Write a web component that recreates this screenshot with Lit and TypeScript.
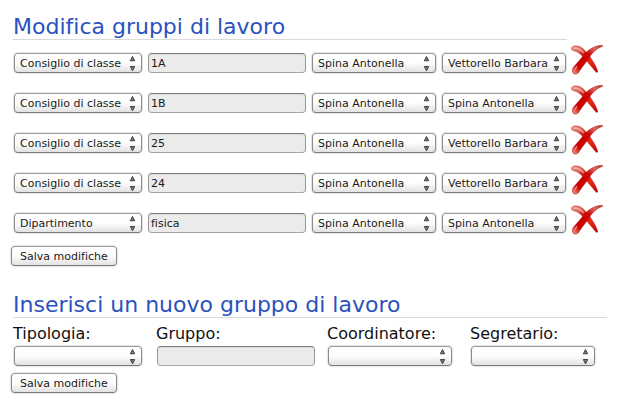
import { LitElement, html, css, svg } from "lit";
import { customElement } from "lit/decorators.js";

const TYPES = ["", "Consiglio di classe", "Dipartimento"];
const TEACHERS = ["", "Spina Antonella", "Vettorello Barbara"];

interface Group {
  type: string;
  name: string;
  coordinator: string;
  secretary: string;
}

const GROUPS: Group[] = [
  { type: TYPES[1], name: "1A", coordinator: TEACHERS[1], secretary: TEACHERS[2] },
  { type: TYPES[1], name: "1B", coordinator: TEACHERS[1], secretary: TEACHERS[1] },
  { type: TYPES[1], name: "25", coordinator: TEACHERS[1], secretary: TEACHERS[2] },
  { type: TYPES[1], name: "24", coordinator: TEACHERS[1], secretary: TEACHERS[2] },
  { type: TYPES[2], name: "fisica", coordinator: TEACHERS[1], secretary: TEACHERS[1] },
];

const cross = svg`
  <defs>
    <linearGradient id="falling" x1="0" y1="0" x2="1" y2="1">
      <stop offset="0" stop-color="#f4a8a0" />
      <stop offset=".22" stop-color="#e86a60" />
      <stop offset=".42" stop-color="#cc0804" />
      <stop offset=".65" stop-color="#f02a10" />
      <stop offset="1" stop-color="#b00000" />
    </linearGradient>
    <linearGradient id="rising" x1="1" y1="0" x2="0" y2="1">
      <stop offset="0" stop-color="#a83030" />
      <stop offset=".18" stop-color="#e06860" />
      <stop offset=".38" stop-color="#cc0804" />
      <stop offset=".78" stop-color="#cc0000" />
      <stop offset=".88" stop-color="#e84a40" />
      <stop offset="1" stop-color="#f4a8a0" />
    </linearGradient>
  </defs>
  <path d="M.8 2.6C1.6 .9 4.6 .6 7.4 1.3C12.4 2.8 16.6 8.4 19.8 13.2C23 17.8 25.4 22 26.8 26.6L25.6 27.6C22.4 23.8 18.8 19.8 15.4 15.6C11 10.2 7 6.2 2.2 5.6C.9 5.2 .3 4 .8 2.6Z"
    fill="url(#falling)" stroke="#b01818" stroke-width=".6" />
  <path d="M31.6 1.1C25 3.6 20.2 8.8 17 14.2C13.6 19.4 9.6 23.4 8 26.8C6.8 29.4 2.6 29.8 1.7 27.2C1 24.4 2 22.4 4.6 19.8C9 15.2 12.6 9.8 17 5.8C21.6 2 27 .4 31.4 .4Z"
    fill="url(#rising)" stroke="#a80c0c" stroke-width=".6" />
  <path d="M2.4 3.3C7 2.4 10.4 5.2 13 8" fill="none" stroke="#fbc8c4" stroke-width="1.1" opacity=".75" />
  <path d="M3.3 26.6C3.4 24.2 4.6 23 6.2 21.2" fill="none" stroke="#f89890" stroke-width="1.2" opacity=".8" />
`;

@customElement("app-root")
export class AppRoot extends LitElement {
  static styles = css`
    :host {
      display: block;
      padding: 14px 11px 22px;
      background: #fff;
      font-family: "DejaVu Sans", sans-serif;
      font-variant-ligatures: none;
      color: #111;
    }
    form {
      margin: 0;
    }
    h2 {
      margin: 0 0 0 2px;
      border-bottom: 1px solid #d9d9d9;
      font-size: 22px;
      font-weight: 400;
      line-height: 25px;
      color: #2a52be;
    }
    .edit h2 {
      margin-right: 40px;
    }
    select,
    input,
    button {
      box-sizing: border-box;
      height: 20px;
      margin: 0;
      border: 1px solid #8f8f8f;
      border-radius: 4px;
      font: 11px "DejaVu Sans", sans-serif;
      font-variant-ligatures: none;
      color: #1a1a1a;
    }
    select,
    button {
      background: linear-gradient(#ffffff, #fdfdfd 50%, #e2e2e2);
      border-color: #9c9c9c #8c8c8c #7c7c7c;
      box-shadow: 0 0 1px 1px #e4e4e4;
    }
    input {
      width: 100%;
      padding: 0 2px;
      background: #ebebeb;
      border-color: #7c7c7c #979797 #a4a4a4;
      box-shadow: inset 0 1px 0 #dcdcdc;
    }
    .picker {
      position: relative;
      height: 20px;
    }
    .picker select {
      display: block;
      width: 100%;
      padding: 0 16px 0 5px;
      appearance: none;
    }
    .picker svg {
      position: absolute;
      right: 6px;
      top: 2px;
      pointer-events: none;
    }
    .rows {
      display: grid;
      gap: 8px;
      margin: 5px 4px 9px 3px;
    }
    .row {
      display: grid;
      grid-template-columns: 128fr 158fr 124fr 124fr 31px;
      column-gap: 6px;
      align-items: center;
      height: 32px;
    }
    .row .picker,
    .row input {
      margin-top: 4px;
    }
    .remove {
      width: 32px;
      height: 32px;
      margin-left: -1px;
      padding: 0;
      border: 0;
      background: none;
      box-shadow: none;
    }
    .remove svg {
      display: block;
    }
    .save {
      display: block;
      padding: 0 8px;
    }
    .create {
      margin-top: 26px;
    }
    .fields {
      display: grid;
      grid-template-columns: 130fr 158fr 130fr 124fr;
      column-gap: 13px;
      margin: 4px 12px 7px 3px;
    }
    .field {
      display: grid;
      grid-template-columns: minmax(0, 1fr);
    }
    .field.type {
      padding-right: 2px;
    }
    .field.coordinator {
      padding-right: 6px;
    }
    label {
      margin-left: -1px;
      font-size: 16px;
      line-height: 24px;
    }
  `;

  private picker(id: string, label: string, options: string[], value = "") {
    return html`
      <div class="picker">
        <select id=${id} aria-label=${label}>
          ${options.map((o) => html`<option ?selected=${o === value}>${o}</option>`)}
        </select>
        <svg width="7" height="17" viewBox="0 0 7 17" aria-hidden="true">
          <path d="M3.5 1.5 5.7 5.8H1.3Z M3.5 15.9 1.3 11.5H5.7Z" fill="#777" stroke="#444" />
        </svg>
      </div>
    `;
  }

  private row(g: Group, i: number) {
    return html`
      <div class="row">
        ${this.picker(`type-${i}`, "Tipologia", TYPES, g.type)}
        <input type="text" aria-label="Gruppo" .value=${g.name} />
        ${this.picker(`coordinator-${i}`, "Coordinatore", TEACHERS, g.coordinator)}
        ${this.picker(`secretary-${i}`, "Segretario", TEACHERS, g.secretary)}
        <button class="remove" type="button" aria-label="Elimina">
          <svg width="32" height="32" viewBox="0 0 32 32" aria-hidden="true">${cross}</svg>
        </button>
      </div>
    `;
  }

  render() {
    return html`
      <form class="edit">
        <h2>Modifica gruppi di lavoro</h2>
        <div class="rows">${GROUPS.map((g, i) => this.row(g, i))}</div>
        <button class="save" type="button">Salva modifiche</button>
      </form>
      <form class="create">
        <h2>Inserisci un nuovo gruppo di lavoro</h2>
        <div class="fields">
          <div class="field type">
            <label for="type">Tipologia:</label>
            ${this.picker("type", "Tipologia", TYPES)}
          </div>
          <div class="field">
            <label for="group">Gruppo:</label>
            <input id="group" type="text" />
          </div>
          <div class="field coordinator">
            <label for="coordinator">Coordinatore:</label>
            ${this.picker("coordinator", "Coordinatore", TEACHERS)}
          </div>
          <div class="field">
            <label for="secretary">Segretario:</label>
            ${this.picker("secretary", "Segretario", TEACHERS)}
          </div>
        </div>
        <button class="save" type="button">Salva modifiche</button>
      </form>
    `;
  }
}
